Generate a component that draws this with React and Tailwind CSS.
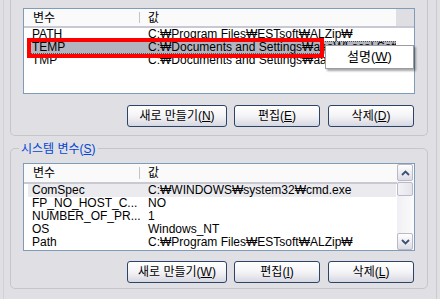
import React from "react";

const F = "font-['Liberation_Sans','Noto_Sans_CJK_KR',sans-serif]";

function Btn({ w, label, k }) {
  return (
    <div
      className={`h-[22px] ${w} flex items-center justify-center rounded-[3px] border border-[#2c4566] bg-gradient-to-b from-white via-[#f4f4f7] to-[#d7d7e2] text-[12px] leading-none text-black`}
    >
      <span>
        {label}(<span className="underline">{k}</span>)
      </span>
    </div>
  );
}

function Header({ h, corner }) {
  return (
    <div className={`flex ${h} border-b-[2px] border-[#c9c9d3] bg-[#fafafb] text-[12px] text-black`}>
      <div className="w-[115px] shrink-0 pl-[9px] flex items-center">변수</div>
      <div className="w-px my-[3px] bg-[#c3c3cb]" />
      <div className="flex-1 pl-[8px] flex items-center">값</div>
      {corner && <div className="w-[18px] bg-[#dfdfe3]" />}
    </div>
  );
}

function Row({ a, b, cls = "" }) {
  return (
    <div className={`ml-[4px] w-[368px] h-[13px] flex items-center text-[12px] leading-[13px] text-black whitespace-nowrap overflow-x-clip ${cls}`}>
      <div className="w-[112px] shrink-0 pl-[4px] overflow-x-clip">{a}</div>
      <div className="flex-1 min-w-0 pl-[8px] overflow-x-clip">{b}</div>
    </div>
  );
}

function Arrow({ up }) {
  return (
    <svg width="9" height="6" viewBox="0 0 9 6">
      <path
        d={up ? "M1 5 L4.5 1.5 L8 5" : "M1 1 L4.5 4.5 L8 1"}
        fill="none"
        stroke="#3d4f72"
        strokeWidth="1.8"
      />
    </svg>
  );
}

function SBtn({ up }) {
  return (
    <div className="h-[17px] w-[16px] flex items-center justify-center rounded-[2px] border border-[#b9b9c7] bg-gradient-to-b from-white to-[#dcdce6]">
      <Arrow up={up} />
    </div>
  );
}

export default function App() {
  return (
    <div className={`relative w-[440px] h-[299px] overflow-hidden bg-[#e0dfe3] flex ${F}`}>
      <div className="w-[3px]" />
      <div className="w-px bg-[#d2d1d6]" />
      <div className="ml-[6px] w-[418px] flex flex-col">
        {/* user variables group */}
        <div className="h-[136px] border-x border-b border-[#c6c5cb] rounded-b-[5px] pt-[8px] px-[12px] flex flex-col">
          <div className="h-[86px] border border-[#7f9db9] bg-white flex flex-col">
            <Header h="h-[19px]" corner />
            <Row a="PATH" b="C:₩Program Files₩ESTsoft₩ALZip₩" />
            <Row
              a="TEMP"
              b="C:₩Documents and Settings₩aaa₩Local Settings₩Temp"
              cls="bg-[#b2b4bf] outline outline-1 outline-dotted outline-[#555] -outline-offset-1"
            />
            <Row a="TMP" b="C:₩Documents and Settings₩aaa₩Local Settings₩Temp" />
          </div>
          <div className="mt-[11px] flex justify-end pr-[1px]">
            <Btn w="w-[100px]" label="새로 만들기" k="N" />
            <div className="w-[7px]" />
            <Btn w="w-[86px]" label="편집" k="E" />
            <div className="w-[8px]" />
            <Btn w="w-[86px]" label="삭제" k="D" />
          </div>
        </div>

        {/* system variables group */}
        <div className="relative mt-[12px] h-[141px] border border-[#c6c5cb] rounded-[5px] pt-[14px] px-[12px] flex flex-col">
          <div className="absolute -top-[7px] left-[8px] px-[2px] bg-[#e0dfe3] text-[12px] leading-[14px] text-[#0046d5]">
            시스템 변수(<span className="underline">S</span>)
          </div>
          <div className="h-[88px] border border-[#7f9db9] bg-white flex">
            <div className="flex-1 flex flex-col">
              <Header h="h-[20px]" />
              <Row a="ComSpec" b="C:₩WINDOWS₩system32₩cmd.exe" cls="bg-[#ebebef]" />
              <Row a="FP_NO_HOST_C..." b="NO" />
              <Row a="NUMBER_OF_PR..." b="1" />
              <Row a="OS" b="Windows_NT" />
              <Row a="Path" b="C:₩Program Files₩ESTsoft₩ALZip₩" />
            </div>
            <div className="w-[17px] flex flex-col bg-gradient-to-r from-[#f0f0f4] to-[#fbfbfd]">
              <SBtn up />
              <div className="mt-[1px] h-[14px] w-[16px] rounded-[2px] border border-[#b9b9c7] bg-gradient-to-r from-[#f2f2f6] to-[#e4e4ec]" />
              <div className="flex-1" />
              <SBtn />
            </div>
          </div>
          <div className="mt-[10px] flex justify-end pr-[1px]">
            <Btn w="w-[100px]" label="새로 만들기" k="W" />
            <div className="w-[7px]" />
            <Btn w="w-[86px]" label="편집" k="I" />
            <div className="w-[8px]" />
            <Btn w="w-[86px]" label="삭제" k="L" />
          </div>
        </div>
      </div>
      <div className="ml-[8px] w-px bg-[#cbcad0]" />

      {/* red highlight box */}
      <div className="absolute left-[27px] top-[38px] w-[297px] h-[20px] border-[4px] border-[#ff0000]" />

      {/* context menu */}
      <div className="absolute left-[325px] top-[45px] w-[89px] h-[24px] bg-white border border-[#9c9ca6] shadow-[2px_2px_2px_rgba(0,0,0,0.35)] flex items-center justify-center text-[13px] text-black">
        <span>
          설명(<span className="underline">W</span>)
        </span>
      </div>
    </div>
  );
}
